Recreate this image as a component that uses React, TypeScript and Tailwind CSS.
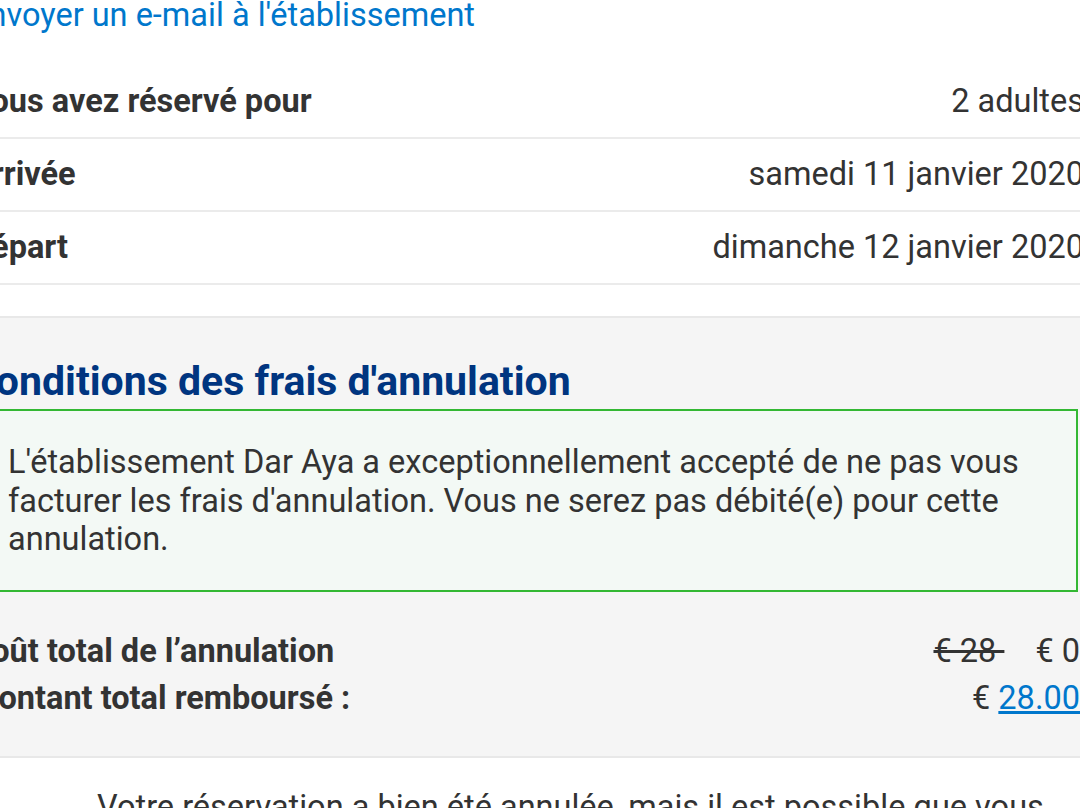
import React from "react";

export default function App() {
  return (
    <div className="w-[1080px] h-[808px] overflow-hidden bg-white text-[#333333] font-['Roboto',sans-serif] text-[32.5px] leading-[38.5px]">
      <div className="ml-[-30px] w-[1114px]">
        <div className="mt-[-4px] text-[#0077cc]">Envoyer un e-mail à l'établissement</div>

        <div className="mt-[31px]">
          <div className="flex justify-between py-[16.5px] border-b-2 border-[#ebebeb]">
            <span className="font-bold">Vous avez réservé pour</span>
            <span>2 adultes</span>
          </div>
          <div className="flex justify-between py-[16px] border-b-2 border-[#ebebeb]">
            <span className="font-bold">Arrivée</span>
            <span>samedi 11 janvier 2020</span>
          </div>
          <div className="flex justify-between py-[16.5px] border-b-2 border-[#ebebeb]">
            <span className="font-bold">Départ</span>
            <span>dimanche 12 janvier 2020</span>
          </div>
        </div>
      </div>

      <div className="mt-[31px] bg-[#f5f5f5] border-y-2 border-[#e8e8e8] pt-[40px] pb-[38px]">
        <div className="ml-[-30px] w-[1114px]">
          <h2 className="text-[41px] leading-[46px] font-bold text-[#003580] ml-[-1px]">Conditions des frais d'annulation</h2>
          <div className="mt-[5px] w-[1108px] border-2 border-[#33b833] bg-[#f3f9f5] pl-[36px] pr-[20px] pt-[32px] pb-[31px]">
            L'établissement Dar Aya a exceptionnellement accepté de ne pas vous facturer les frais d'annulation. Vous ne serez pas débité(e) pour cette annulation.
          </div>
          <div className="mt-[40px] flex flex-col gap-[9px] pr-[4px]">
            <div className="flex justify-between">
              <span className="font-bold">Coût total de l’annulation</span>
              <span>
                <span className="line-through">€ 28 </span>
                <span className="ml-[31px]">€ 0</span>
              </span>
            </div>
            <div className="flex justify-between">
              <span className="font-bold">Montant total remboursé :</span>
              <span>
                € <span className="text-[#0077cc] underline">28.00</span>
              </span>
            </div>
          </div>
        </div>
      </div>

      <div className="pt-[30px] pl-[97px]">
        Votre réservation a bien été annulée, mais il est possible que vous
      </div>
    </div>
  );
}
